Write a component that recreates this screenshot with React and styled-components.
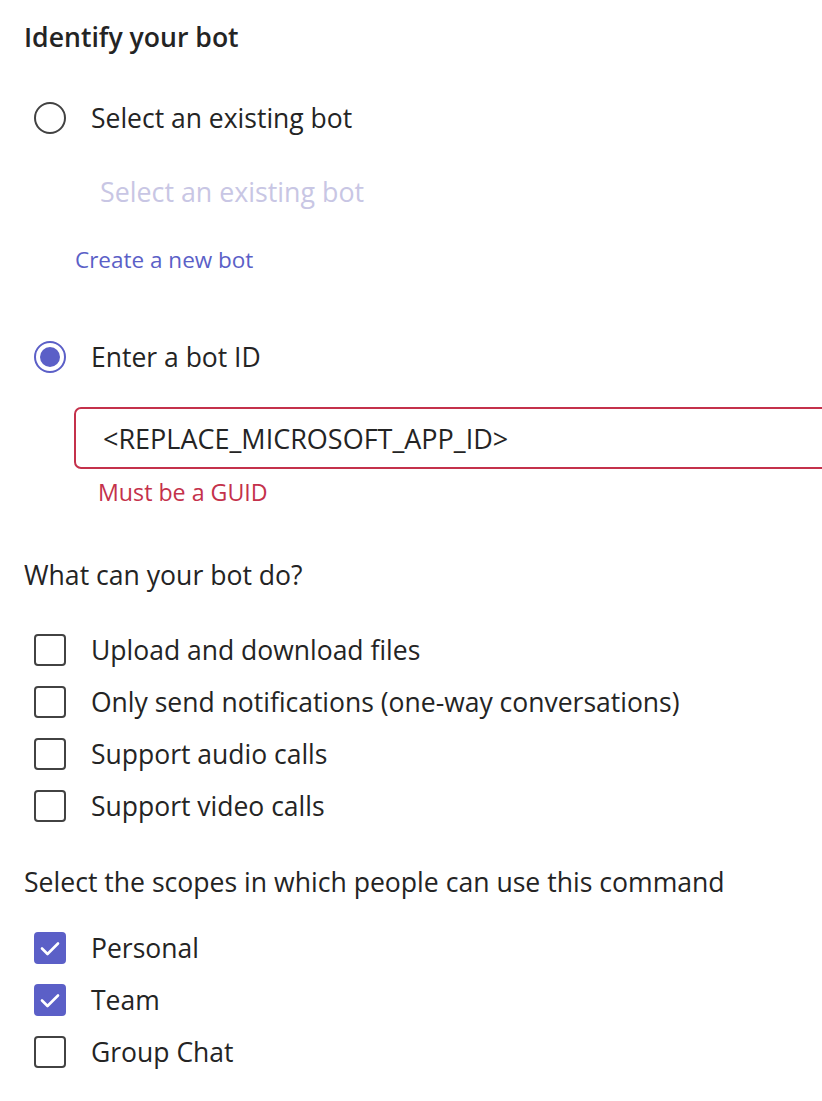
import React from "react";
import styled, { createGlobalStyle, css } from "styled-components";

const Global = createGlobalStyle`
  html, body { margin: 0; padding: 0; background: #ffffff; }
  body { overflow-x: hidden; font-family: "Open Sans", "Noto Sans", sans-serif; color: #242424; }
`;

const Page = styled.div`
  padding: 19px 0 40px 24px;
  width: 822px;
  box-sizing: border-box;
  overflow: hidden;
`;

const Heading = styled.h2`
  margin: 0;
  font-size: 26.6px;
  font-weight: 600;
  line-height: 36px;
  color: #242424;
`;

const Label = styled.div`
  margin-top: ${(p) => p.$mt}px;
  font-size: 26.6px;
  line-height: 36px;
  color: #242424;
  white-space: nowrap;
`;

const Row = styled.label`
  display: flex;
  align-items: center;
  height: 52px;
  margin-top: ${(p) => p.$mt || 0}px;
  padding-left: 10px;
  gap: 25px;
  font-size: 26.5px;
  color: #242424;
  white-space: nowrap;
`;

const RadioCircle = styled.span`
  width: 32px;
  height: 32px;
  box-sizing: border-box;
  border-radius: 50%;
  border: 2px solid ${(p) => (p.$checked ? "#5b5fc7" : "#424242")};
  display: flex;
  align-items: center;
  justify-content: center;
  flex: none;
  ${(p) =>
    p.$checked &&
    css`
      &::after {
        content: "";
        width: 20px;
        height: 20px;
        border-radius: 50%;
        background: #5b5fc7;
      }
    `}
`;

const Box = styled.span`
  width: 32px;
  height: 32px;
  box-sizing: border-box;
  border-radius: 4px;
  border: 2px solid ${(p) => (p.$checked ? "#5b5fc7" : "#424242")};
  background: ${(p) => (p.$checked ? "#5b5fc7" : "#ffffff")};
  display: flex;
  align-items: center;
  justify-content: center;
  flex: none;
`;

const Placeholder = styled.div`
  margin-top: 30px;
  padding-left: 76px;
  font-size: 26.8px;
  line-height: 36px;
  color: #c8c6e4;
`;

const Link = styled.a`
  display: block;
  margin-top: 34px;
  margin-left: 51px;
  font-size: 22.5px;
  line-height: 32px;
  color: #5b5fc7;
  text-decoration: none;
`;

const Input = styled.div`
  margin-top: 24px;
  margin-left: 50px;
  width: 800px;
  height: 62px;
  box-sizing: border-box;
  border: 2px solid #c4314b;
  border-radius: 7px;
  display: flex;
  align-items: center;
  padding-left: 27px;
  font-size: 27px;
  color: #242424;
`;

const ErrorText = styled.div`
  margin-top: 8px;
  padding-left: 74px;
  font-size: 23.2px;
  line-height: 30px;
  color: #c4314b;
`;

const Check = () => (
  <svg width="20" height="15" viewBox="0 0 20 15" fill="none">
    <path d="M2 7.5 L7.5 13 L18 2.5" stroke="#fff" strokeWidth="2.6" strokeLinecap="round" strokeLinejoin="round" />
  </svg>
);

const Radio = ({ checked, children, mt }) => (
  <Row $mt={mt}>
    <RadioCircle $checked={checked} />
    <span>{children}</span>
  </Row>
);

const Checkbox = ({ checked, children, mt }) => (
  <Row $mt={mt}>
    <Box $checked={checked}>{checked && <Check />}</Box>
    <span>{children}</span>
  </Row>
);

export default function App() {
  return (
    <>
      <Global />
      <Page>
        <Heading>Identify your bot</Heading>
        <Radio mt={37}>Select an existing bot</Radio>
        <Placeholder>Select an existing bot</Placeholder>
        <Link href="#">Create a new bot</Link>
        <Radio mt={55} checked>
          Enter a bot ID
        </Radio>
        <Input>&lt;REPLACE_MICROSOFT_APP_ID&gt;</Input>
        <ErrorText>Must be a GUID</ErrorText>
        <Label $mt={50}>What can your bot do?</Label>
        <Checkbox mt={31}>Upload and download files</Checkbox>
        <Checkbox>Only send notifications (one-way conversations)</Checkbox>
        <Checkbox>Support audio calls</Checkbox>
        <Checkbox>Support video calls</Checkbox>
        <Label $mt={32}>Select the scopes in which people can use this command</Label>
        <Checkbox mt={22} checked>
          Personal
        </Checkbox>
        <Checkbox checked>Team</Checkbox>
        <Checkbox>Group Chat</Checkbox>
      </Page>
    </>
  );
}
